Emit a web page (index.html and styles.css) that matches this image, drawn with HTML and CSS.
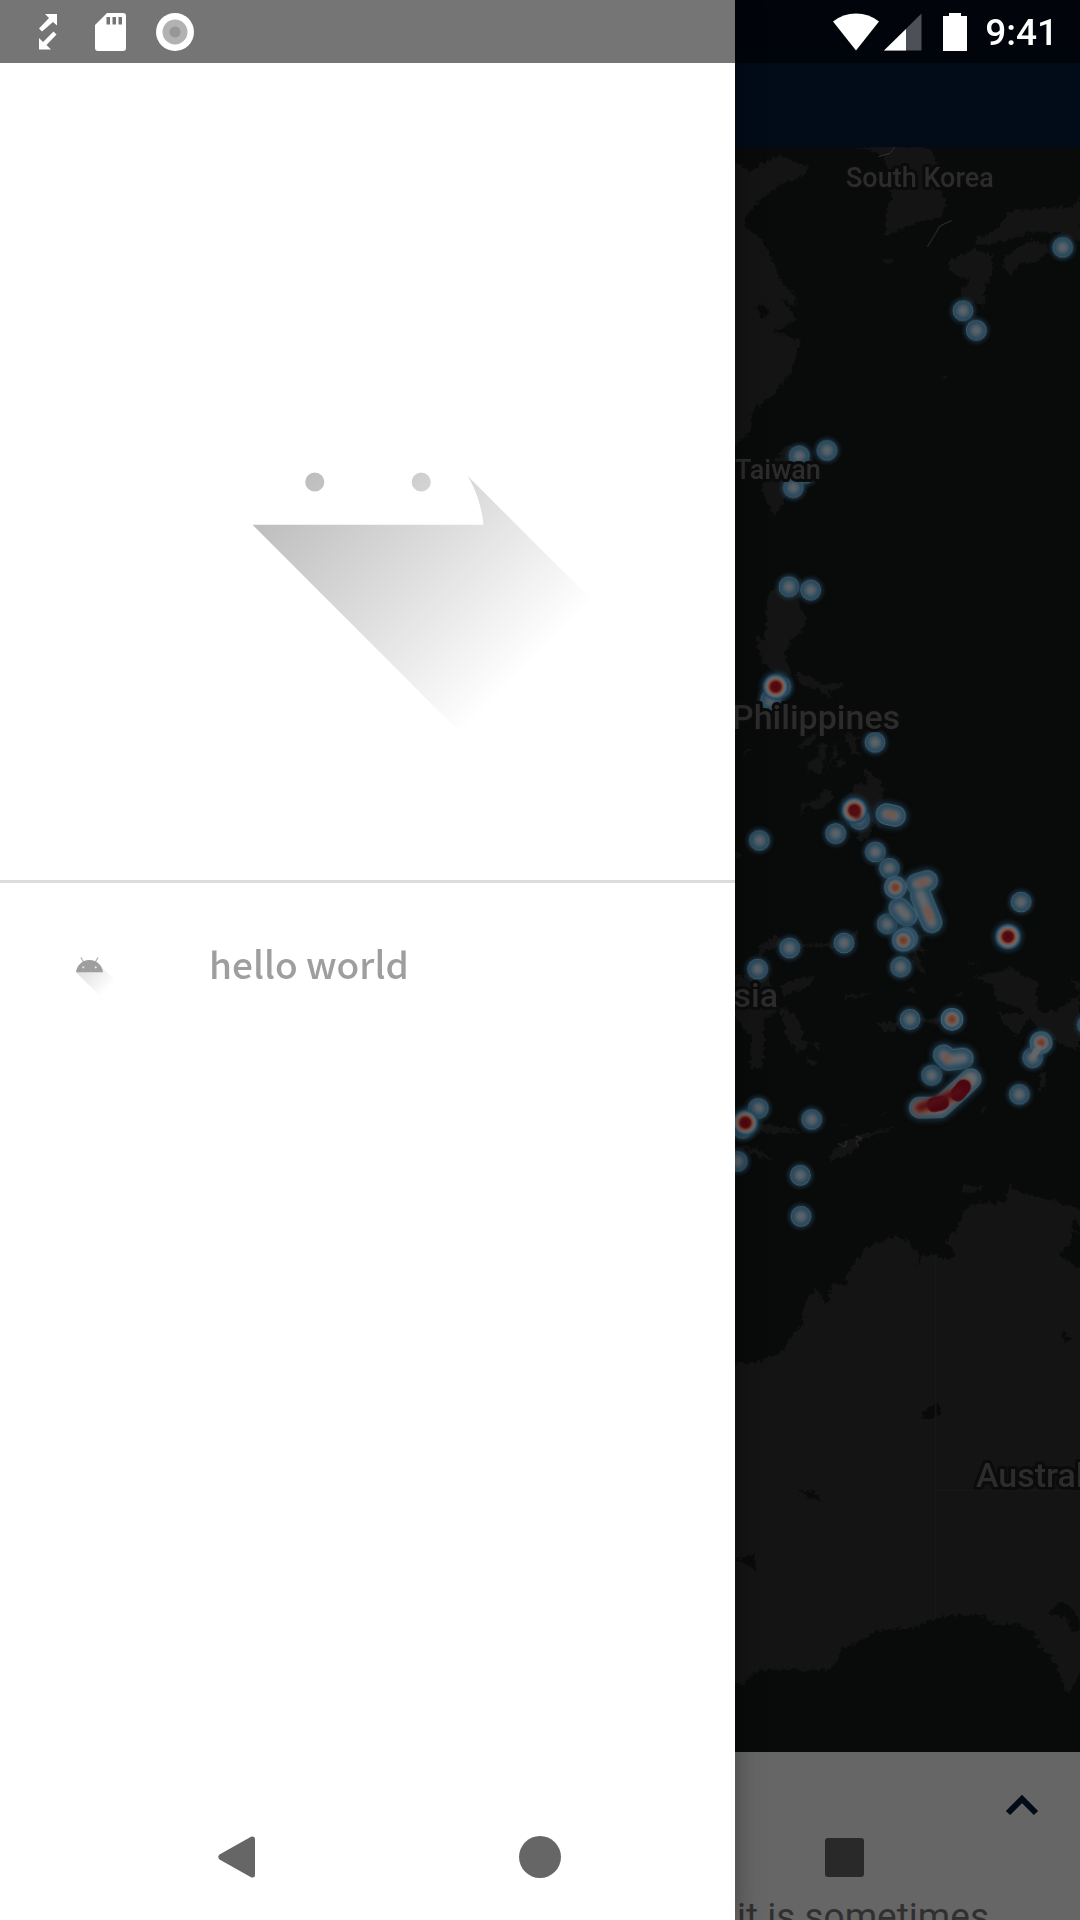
FILE: index.html
```html
<!DOCTYPE html>
<html lang="en">
<head>
<meta charset="utf-8">
<meta name="viewport" content="width=device-width, initial-scale=1">
<title>Map</title>
<link rel="stylesheet" href="styles.css">
</head>
<body>
<div class="screen">
  <div class="topbar"></div>
  <header class="appbar"></header>
  <main class="map">
    <svg class="map-canvas" viewBox="0 147 1080 1605" preserveAspectRatio="xMaxYMid slice" role="img" aria-label="Heat map">
      <defs>
        <radialGradient id="glow">
          <stop offset="0.6" stop-color="#2b536c" stop-opacity=".55"/>
          <stop offset="1" stop-color="#16303f" stop-opacity="0"/>
        </radialGradient>
        <radialGradient id="cool">
          <stop offset="0" stop-color="#60646a"/>
          <stop offset=".3" stop-color="#565f66"/>
          <stop offset=".75" stop-color="#2b4b5e"/>
          <stop offset=".88" stop-color="#2d4a5c"/>
          <stop offset="1" stop-color="#48616f"/>
        </radialGradient>
        <radialGradient id="warm">
          <stop offset="0" stop-color="#713420"/>
          <stop offset=".25" stop-color="#744535"/>
          <stop offset=".5" stop-color="#686464"/>
          <stop offset=".8" stop-color="#2b4f66"/>
          <stop offset="1" stop-color="#48616f"/>
        </radialGradient>
        <radialGradient id="hot">
          <stop offset="0" stop-color="#4d0712"/>
          <stop offset=".38" stop-color="#560c12"/>
          <stop offset=".55" stop-color="#80503c"/>
          <stop offset=".72" stop-color="#686b6e"/>
          <stop offset=".9" stop-color="#285069"/>
          <stop offset="1" stop-color="#1c3849"/>
        </radialGradient>
        <filter id="coast" x="-5%" y="-5%" width="110%" height="110%" color-interpolation-filters="sRGB">
          <feTurbulence type="fractalNoise" baseFrequency=".07" numOctaves="3" seed="4"/>
          <feDisplacementMap in="SourceGraphic" scale="26" xChannelSelector="R" yChannelSelector="G"/>
        </filter>
        <filter id="soft" filterUnits="userSpaceOnUse" x="0" y="0" width="1100" height="700" color-interpolation-filters="sRGB"><feGaussianBlur stdDeviation="6"/></filter>
        <filter id="halo" filterUnits="userSpaceOnUse" x="0" y="0" width="1100" height="700" color-interpolation-filters="sRGB"><feGaussianBlur stdDeviation="9"/></filter>
        <g id="spot"><circle r="48" fill="url(#glow)"/><circle r="31" fill="url(#cool)"/></g>
        <g id="ember"><circle r="52" fill="url(#glow)"/><circle r="34" fill="url(#warm)"/></g>
        <g id="fire"><circle r="58" fill="url(#glow)"/><circle r="39" fill="url(#hot)"/></g>
        <path id="mindanao" d="M373 88L376 96"/>
        <path id="mindanao-east" d="M469 102L496 108"/>
        <path id="molucca" d="M560 312L592 302M572 345L605 427M508 384L530 408"/>
        <path id="ambon" d="M641 225L655 240 699 235"/>
        <path id="banda" d="M569 383L630 382 695 323 722 297"/>
      </defs>
      <rect y="147" width="1080" height="1605" fill="#090a0a"/>
      <g transform="translate(730 140) scale(.33333)">
        <g class="land" filter="url(#coast)">
          <path d="M0 60L65 95 110 60 150 45 235 80 225 105 150 135 110 165 75 195 45 235 45 260 100 300 140 385 145 415 195 465 200 500 155 475 200 540 130 575 215 600 195 650 180 705 130 760 60 820 65 870 0 930z"/>
          <path d="M380 20H595L630 75 600 90 650 185 630 235 590 240 520 265 470 290 465 230 485 170 475 90 450 40z"/>
          <path d="M735 295L780 280 850 210 980 200 1030 205 1050 160V310L985 280 900 280 800 310 735 315zM820 355L900 300 950 310 950 340 920 365 870 370 845 405 820 385zM650 370L730 325 785 345 790 400 765 440 760 500 700 480 690 450 720 420 665 400zM455 362L490 355 490 368 460 372z"/>
          <path d="M175 915L215 930 190 1020 160 1090 133 1130 95 1060 100 1030 130 1000 135 950z"/>
          <path d="M630 715L660 705 640 722zM540 858L570 818 560 832z"/>
          <g transform="translate(0 1200)">
            <path d="M125 145L212 160 210 205 230 235 210 280 180 300 165 345 185 400 150 410 110 375 95 370 75 285 105 300 110 180z"/>
            <path d="M190 400L240 405 265 430 340 430 330 450 290 450 310 485 270 450 215 435z"/>
            <path d="M205 630L225 590 265 580 240 615zM260 612L290 610 285 660 275 705 235 690 235 665 265 650zM290 690L320 605 318 640 290 695zM320 660L350 658 350 680 318 682zM340 580L400 590 375 600 390 650 370 640zM25 655L55 625 75 630 50 640z"/>
            <path d="M205 840L215 790 265 780 280 750 305 750 310 775 270 810 230 795zM330 790L370 755 370 730 410 735 405 680 455 730 460 780 445 800 455 870 430 850 415 900H380L395 850z"/>
          </g>
          <g transform="translate(0 1920)">
            <path d="M85 530L90 495 140 465 165 490 320 490 380 450 385 465 350 505 230 500 120 505 95 525zM150 620L180 600 255 590 240 615 160 650zM15 590H115L150 690 100 720H15zM160 680L200 720 160 740zM15 215L40 225 20 240zM555 460L600 465 565 490 595 515 560 515 590 590 550 560 545 490zM345 642L455 642 350 655zM525 635L540 620 565 635zM670 650L690 640 700 650zM705 545L750 550 730 558zM725 590L800 575 840 560 870 580 920 600 920 660 915 740 1050 740V610L1020 590 1050 640 985 690 900 700 850 680 800 660 790 620z"/>
          </g>
          <g transform="translate(0 2520)">
            <path d="M15 80H105L100 265 60 265 65 170 15 120zM150 80L190 100 220 150 215 180 245 190 200 220 170 170zM230 230L265 250 240 260zM240 185L270 190 265 215zM445 125L510 125 490 160 455 150zM570 115L630 115 625 130 580 130zM800 100L880 100 915 50 940 120 1050 140V210L990 190 930 160 900 110 860 170 840 150zM925 340L935 270 955 280 940 325zM745 400L770 370 765 395z"/>
            <path d="M60 440L100 430 200 452 240 452 180 460 75 455zM280 440L385 428 340 436zM435 405L485 395 460 405zM15 500L80 505 130 540 100 535 50 510 15 508zM300 545L310 505 380 465 510 438 450 460 400 475 360 520z"/>
            <path d="M690 635L700 610 760 622 730 640z"/>
          </g>
          <path transform="translate(0 3060)" d="M0 625L30 605 60 610 100 600 150 580 185 530 225 485 215 440 235 410 260 385 290 440 305 370 350 380 350 340 400 270 450 245 495 225 530 240 565 280 560 320 575 290 610 285 660 300 680 280 645 250 690 190 700 150 750 125 800 130 830 120 835 75 880 100 960 120 1060 150V215H1025L1020 250 990 285 1060 335V1530L1010 1600 990 1540 960 1485 925 1460 930 1440 890 1402 830 1390 800 1395 745 1360 720 1368 670 1365 615 1375 540 1405 440 1412 380 1450 335 1465 320 1505 300 1530 200 1528 90 1530 60 1545 50 1570H0z"/>
        </g>
        <g class="lake" filter="url(#coast)">
          <path d="M80 500L105 495 120 515 100 535z"/>
          <path transform="translate(0 3060)" d="M575 760L615 730 630 740 632 760 612 776 580 774zM210 990L260 1000 272 1025 230 1008zM990 515L1025 535 1010 550zM20 1200L75 1180 75 1230 50 1215zM955 1360L990 1325 1030 1345 1050 1390V1410L1025 1420 1010 1370zM1030 180L1050 190V215L1020 205z"/>
        </g>
        <g class="border">
          <path d="M445 50L480 40 494 21M592 321L630 258 665 241"/>
          <path transform="translate(0 2520)" d="M323 491L345 501 351 481M376 469L395 474 378 484 386 500"/>
        </g>
        <path class="state-line" transform="translate(0 3060)" d="M617 285V1375M617 990H1060"/>
        <g>
          <use href="#spot" x="998" y="322"/><use href="#spot" x="699" y="512"/><use href="#spot" x="739" y="571"/>
          <use href="#spot" x="208" y="948"/><use href="#spot" x="291" y="931"/><use href="#spot" x="225" y="1000"/><use href="#spot" x="190" y="1043"/>
        </g>
        <g transform="translate(0 1200)">
          <use href="#spot" x="177" y="140"/><use href="#spot" x="242" y="150"/>
          <use href="#spot" x="122" y="480"/><use href="#spot" x="152" y="440"/><use href="#fire" x="137" y="440"/>
          <use href="#spot" x="435" y="607"/>
        </g>
        <g transform="translate(0 1920)">
          <use href="#spot" x="88" y="181"/><use href="#spot" x="317" y="161"/>
          <use href="#spot" x="388" y="118"/><use href="#fire" x="373" y="91"/>
          <g class="blob">
            <path class="ash" d="M373 88L382 108"/>
            <use class="halo" href="#mindanao-east"/><use class="edge" href="#mindanao-east"/><use class="rim" href="#mindanao-east"/><use class="core" href="#mindanao-east"/>
            <path class="rose" d="M475 102L490 106"/>
          </g>
          <use href="#spot" x="436" y="216"/><use href="#spot" x="478" y="265"/>
          <use href="#spot" x="472" y="432"/>
          <g class="blob">
            <use class="halo" href="#molucca"/><use class="edge" href="#molucca"/><use class="rim" href="#molucca"/><use class="core" href="#molucca"/>
            <path class="rose" d="M568 308L590 304M590 385L601 415"/>
          </g>
          <use href="#ember" x="496" y="322"/>
          <use href="#ember" x="530" y="475"/><use href="#ember" x="520" y="481"/>
          <use href="#spot" x="512" y="561"/><use href="#spot" x="873" y="366"/><use href="#fire" x="834" y="470"/>
          <use href="#spot" x="342" y="489"/><use href="#spot" x="179" y="504"/><use href="#spot" x="83" y="567"/>
        </g>
        <g transform="translate(0 2520)">
          <use href="#spot" x="540" y="118"/><use href="#ember" x="666" y="118"/><use href="#spot" x="1073" y="135"/>
          <use href="#spot" x="605" y="286"/>
          <g class="blob">
            <use class="halo" href="#ambon"/><use class="edge" href="#ambon"/><use class="rim" href="#ambon"/><use class="core" href="#ambon"/>
            <path class="rose" d="M645 229L655 240"/>
          </g>
          <use href="#spot" x="908" y="233"/><use href="#ember" x="933" y="188"/>
          <path class="bridge" d="M910 228L926 204"/>
          <use href="#spot" x="868" y="343"/>
          <g class="blob">
            <use class="halo" href="#banda"/><use class="edge" href="#banda"/><use class="rim" href="#banda"/><use class="wide" href="#banda"/>
            <path class="rust" d="M569 383L628 372 692 328 703 315"/>
            <path class="blaze" d="M612 374L635 369M683 342L701 320"/>
            <path class="ash" d="M569 383L690 332"/>
          </g>
          <use href="#spot" x="85" y="385"/>
          <use href="#spot" x="37" y="445"/><use href="#fire" x="46" y="428"/>
          <use href="#spot" x="245" y="418"/><use href="#spot" x="22" y="544"/>
          <use href="#spot" x="211" y="586"/><use href="#spot" x="213" y="709"/>
        </g>
      </g>
      <g class="label">
        <text x="846" y="187">South Korea</text>
        <text x="735" y="479">Taiwan</text>
        <g class="label-large">
          <text x="732" y="729">Philippines</text>
          <text x="778" y="1007" text-anchor="end">Indonesia</text>
          <text x="976" y="1487">Australia</text>
        </g>
      </g>
    </svg>
  </main>
  <section class="sheet">
    <button class="expand" type="button" aria-label="Expand">
      <svg width="34" height="22" viewBox="0 0 34 22"><path d="M3 18L17 4 31 18" fill="none" stroke="#020b18" stroke-width="6"/></svg>
    </button>
    <p class="sheet-text">it is sometimes</p>
  </section>

  <aside class="drawer">
    <div class="drawer-top"></div>
    <div class="drawer-header">
      <svg class="drawer-logo" viewBox="0 0 108 108" aria-hidden="true">
        <defs>
          <linearGradient id="shade" gradientUnits="userSpaceOnUse" x1="42.9492" y1="49.5955" x2="85.8476" y2="92.4963">
            <stop offset="0" stop-color="#000" stop-opacity=".267"/>
            <stop offset="1" stop-color="#000" stop-opacity="0"/>
          </linearGradient>
          <path id="bot-shadow" d="M31 63.928c0 0 6.4-11 12.1-13.1c7.2-2.6 26-1.4 26-1.4l38.1 38.1L107 108.928l-32-1L31 63.928z"/>
          <path id="bot" d="M65.3 45.828l3.8-6.6c.2-.4 .1-.9-.3-1.1c-.4-.2-.9-.1-1.1 .3l-3.9 6.7c-6.3-2.8-13.4-2.8-19.7 0l-3.9-6.7c-.2-.4-.7-.5-1.1-.3C38.8 38.328 38.7 38.828 38.9 39.228l3.8 6.6C36.2 49.428 31.7 56.028 31 63.928h46C76.3 56.028 71.8 49.428 65.3 45.828zM41.5 55.4a1.9 1.9 0 1 0 3.8 0a1.9 1.9 0 1 0-3.8 0zM62.7 55.4a1.9 1.9 0 1 0 3.8 0a1.9 1.9 0 1 0-3.8 0z"/>
        </defs>
        <use href="#bot-shadow" fill="url(#shade)"/>
        <use href="#bot" fill="#fff" fill-rule="evenodd"/>
      </svg>
    </div>
    <nav class="menu">
      <a class="menu-item" href="#">
        <svg width="63" height="63" viewBox="0 0 108 108" aria-hidden="true">
          <use href="#bot-shadow" fill="url(#shade)" opacity=".5"/>
          <use href="#bot" fill="#9e9e9e" fill-rule="evenodd"/>
        </svg>
        <span class="menu-label">hello world</span>
      </a>
    </nav>
  </aside>

  <div class="status">
    <div class="status-left">
      <svg width="20" height="38" viewBox="0 0 20 38"><path fill="#fff" d="M7 1H19V12.500L15 9 4 18.500 1 15.500 11 5zM13 36.500H1V25L5 29 15.500 18.500 18.500 21.500 8.500 32z"/></svg>
      <svg class="sd-card" width="31" height="38" viewBox="0 0 31 38"><path fill="#fff" fill-rule="evenodd" d="M12 0H28Q31 0 31 3V35Q31 38 28 38H3Q0 38 0 35V12zM11.500 4V11.500H15V4zM17.500 4V11.500H21V4zM23.500 4V11.500H27V4z"/></svg>
      <svg width="38" height="38" viewBox="0 0 38 38"><circle cx="19" cy="19" r="19" fill="#fff"/><circle cx="19" cy="19" r="12.500" fill="#b2b2b2"/><circle cx="19" cy="19" r="5.500" fill="#979797"/></svg>
    </div>
    <div class="status-right">
      <svg width="46" height="38" viewBox="0 0 46 38"><path fill="#fff" d="M0 8.500Q10 .5 23 .5T46 8.500L23 37.500z"/></svg>
      <svg class="signal" width="38" height="38" viewBox="0 0 38 38"><path fill="#4d5054" d="M0 37.500L37.500 .5V37.500z"/><path fill="#fff" d="M0 37.500L22 16V37.500z"/></svg>
      <svg class="battery" width="24" height="38" viewBox="0 0 24 38"><path fill="#fff" d="M6 0H18V3H24V38H0V3H6z"/></svg>
      <span class="clock">9:41</span>
    </div>
  </div>

  <div class="navbar">
    <button type="button" aria-label="Back"><svg width="37" height="42" viewBox="0 0 37 42"><path d="M1.500 18.500L33 .8Q37 -.5 37 3V39Q37 42.500 33 41.200L1.500 23.500Q-1 21 1.500 18.500z"/></svg></button>
    <button type="button" aria-label="Home"><svg width="42" height="42" viewBox="0 0 42 42"><circle cx="21" cy="21" r="21"/></svg></button>
    <button type="button" aria-label="Recent apps"><svg width="40" height="40" viewBox="0 0 40 40"><rect width="39" height="39" y="1" x="1" rx="3"/></svg></button>
  </div>
</div>
</body>
</html>
```
FILE: styles.css
```css
* {
  box-sizing: border-box;
}

body {
  margin: 0;
  background: #090a0a;
  font-family: Roboto, "Liberation Sans", sans-serif;
}

button {
  padding: 0;
  border: 0;
  background: none;
}

svg {
  display: block;
}

.screen {
  position: relative;
  display: flex;
  flex-direction: column;
  height: 100vh;
  overflow: hidden;
}

.topbar {
  flex: none;
  height: 63px;
  background: #01050b;
}

.appbar {
  flex: none;
  height: 84px;
  background: #020b18;
}

.map {
  flex: 1;
  min-height: 0;
}

.map-canvas {
  width: 100%;
  height: 100%;
}

.land {
  fill: #141414;
}

.lake {
  fill: #090a0a;
}

.border {
  fill: none;
  stroke: #343434;
  stroke-width: 3px;
}

.state-line {
  fill: none;
  stroke: #191919;
  stroke-width: 5px;
}

.blob,
.bridge {
  fill: none;
  stroke-linecap: round;
  stroke-linejoin: round;
}

.bridge {
  stroke: #646567;
  stroke-width: 20px;
}

.blob .halo {
  stroke: #1c3a4c;
  stroke-width: 74px;
  filter: url(#halo);
}

.blob .edge {
  stroke: #46606e;
  stroke-width: 64px;
}

.blob .rim {
  stroke: #2b4d61;
  stroke-width: 58px;
}

.blob .core {
  stroke: #63666a;
  stroke-width: 30px;
  filter: url(#soft);
}

.blob .wide {
  stroke: #6b6b6c;
  stroke-width: 44px;
  filter: url(#soft);
}

.blob .rose {
  stroke: #7a5142;
  stroke-width: 16px;
  filter: url(#soft);
}

.blob .rust {
  stroke: #743a2a;
  stroke-width: 38px;
  filter: url(#soft);
}

.blob .blaze {
  stroke: #4d0712;
  stroke-width: 44px;
}

.blob .ash {
  stroke: #520f14;
  stroke-width: 20px;
  filter: url(#soft);
}

.label {
  font-size: 27px;
  font-weight: 500;
  fill: #2c2c2c;
  stroke: #0b0b0b;
  stroke-width: 6px;
  stroke-linejoin: round;
  paint-order: stroke;
}

.label-large {
  font-size: 34px;
}

.sheet {
  flex: none;
  display: flex;
  flex-direction: column;
  align-items: flex-end;
  gap: 58px;
  height: 168px;
  padding: 22px 27px 0;
  overflow: hidden;
  background: #666;
}

.expand {
  display: grid;
  flex: none;
  place-items: center;
  width: 63px;
  height: 63px;
}

.sheet-text {
  margin: 0 64px 0 0;
  color: #303030;
  font-size: 37px;
  line-height: 44px;
}

.drawer {
  position: absolute;
  top: 0;
  bottom: 0;
  left: 0;
  width: calc(100% - 345px);
  background: #fff;
  box-shadow: 0 0 26px rgba(0, 0, 0, 0.35);
}

.drawer-top {
  height: 63px;
  background: #757575;
}

.drawer-header {
  display: flex;
  justify-content: center;
  height: 820px;
  padding-top: 141px;
  border-bottom: 3px solid #dcdcdc;
}

.drawer-logo {
  width: 542px;
  height: 542px;
}

.menu {
  padding-top: 20px;
}

.menu-item {
  display: flex;
  align-items: center;
  gap: 88px;
  height: 126px;
  padding-left: 58px;
  color: #9e9e9e;
  font-family: "Noto Sans CJK SC", "Noto Sans", sans-serif;
  font-size: 37px;
  font-weight: 500;
  line-height: 60px;
  text-decoration: none;
}

.menu-label {
  padding-bottom: 6px;
}

.status {
  position: absolute;
  top: 0;
  left: 0;
  right: 0;
  display: flex;
  justify-content: space-between;
  height: 63px;
  padding: 0 22px 0 38px;
}

.status-left,
.status-right {
  display: flex;
  align-items: center;
}

.status-left {
  gap: 30px;
}

.sd-card {
  margin-left: 7px;
}

.signal {
  margin-left: 5px;
}

.battery {
  margin-left: 21px;
}

.clock {
  margin-left: 18px;
  padding-top: 2px;
  color: #fff;
  font-size: 37px;
  font-weight: 500;
  line-height: 44px;
}

.navbar {
  position: absolute;
  bottom: 0;
  left: 0;
  right: 0;
  display: flex;
  justify-content: center;
  gap: 178px;
  height: 126px;
}

.navbar button {
  display: grid;
  place-items: center;
  width: 126px;
}

.navbar svg {
  fill: rgba(0, 0, 0, 0.6);
}
```
